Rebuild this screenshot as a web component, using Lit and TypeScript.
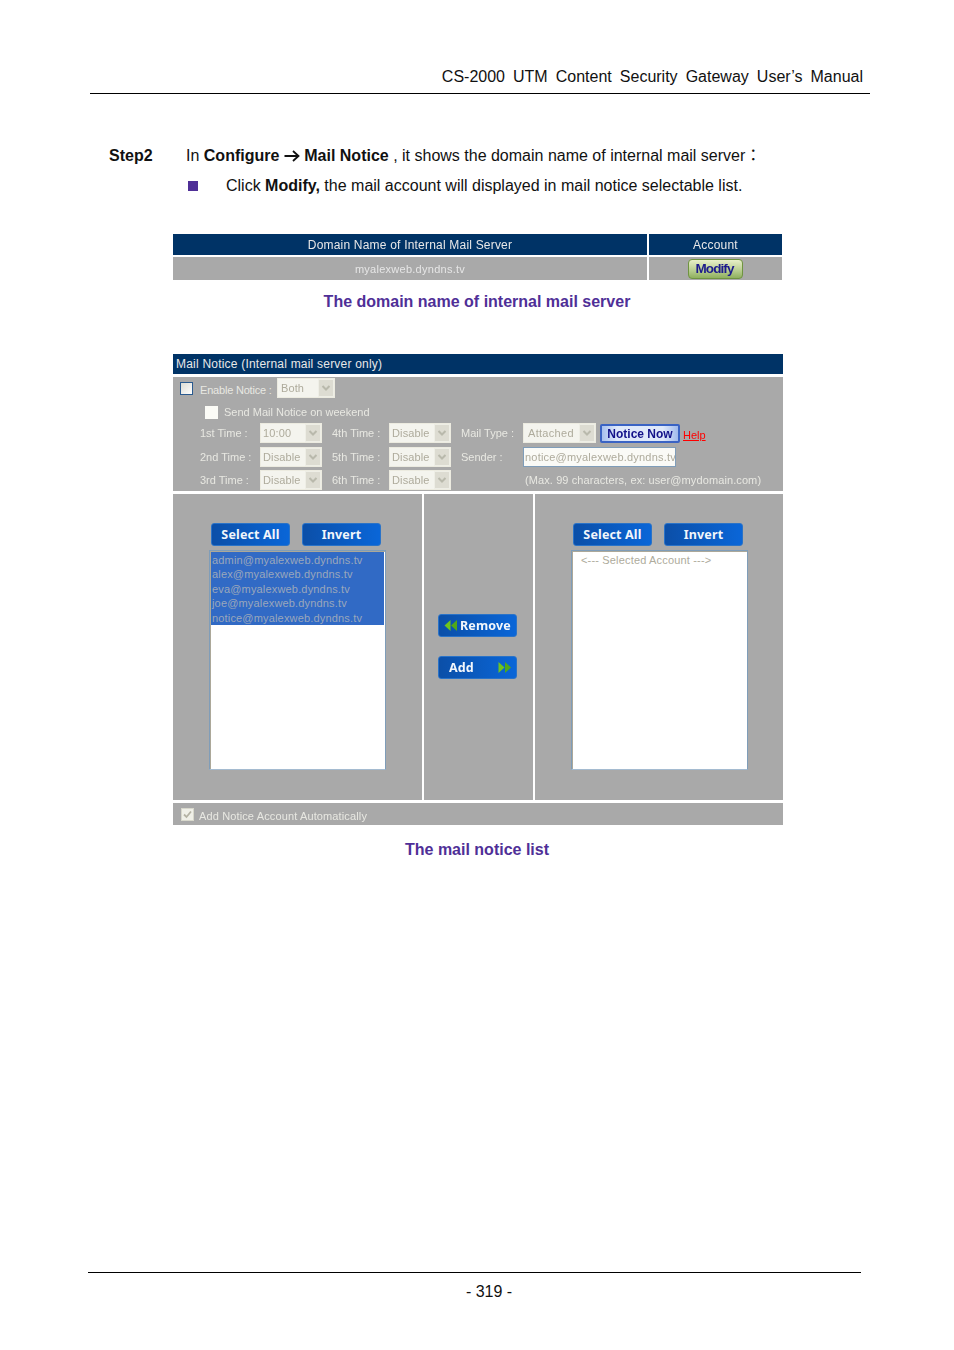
import { LitElement, html, css, svg } from "lit";
import { customElement } from "lit/decorators.js";

const chev = html`<svg class="chev" viewBox="0 0 10 10" width="10" height="10"><path d="M1.5 3 L5 6.5 L8.5 3" fill="none" stroke="#b9b9ac" stroke-width="2"/></svg>`;
const arrowsL = svg`<path d="M6.5 1 V12 L0.5 6.5Z" fill="#6fc41e"/><path d="M13 1 V12 L7 6.5Z" fill="#4fa81a"/>`;
const arrowsR = svg`<path d="M0.5 1 V12 L6.5 6.5Z" fill="#6fc41e"/><path d="M7 1 V12 L13 6.5Z" fill="#4fa81a"/>`;

@customElement("app-root")
export class AppRoot extends LitElement {
  static styles = css`
    :host { display: block; background: #fff; font-family: "Liberation Sans", "Noto Sans CJK TC", Arial, sans-serif; color: #111; }
    .page { width: 954px; height: 1350px; display: flex; flex-direction: column; overflow: hidden; background: #fff; }
    .head { margin: 67px 0 0 90px; width: 780px; height: 26px; box-sizing: content-box; border-bottom: 1px solid #000; text-align: right; font-size: 16px; line-height: 20px; word-spacing: 3.6px; }
    .head span { margin-right: 7px; }
    .step { margin: 52px 0 0 109px; display: flex; font-size: 16px; line-height: 20px; height: 20px; }
    .step .k { width: 77px; font-weight: 700; }
    .arr { display: inline-block; vertical-align: -1px; margin-right: 0; }
    .bul { margin: 10px 0 0 188px; display: flex; align-items: center; font-size: 16px; line-height: 20px; height: 20px; }
    .sq { width: 10px; height: 10px; background: #4f2f97; margin-right: 28px; }
    .t1 { margin: 38px 0 0 173px; width: 609px; display: grid; grid-template-columns: 474px 133px; column-gap: 2px; row-gap: 2px; grid-template-rows: 21px 23px; filter: blur(.45px); font-size: 12px; }
    .t1 > div { display: flex; align-items: center; justify-content: center; }
    .hd { background: #003366; color: #e8e8e8; letter-spacing: .2px; }
    .gr { background: #a9a9a9; color: #e6e6e6; font-size: 11px; letter-spacing: .26px; }
    .modify { width: 55px; height: 20px; box-sizing: border-box; border: 1px solid #6f9440; border-radius: 4px; padding-right: 2px; background: linear-gradient(#e8efc8, #b6cc8e 60%, #8fb05e); color: #1c1a8c; font-weight: 700; font-size: 13.5px; letter-spacing: -.9px; display: flex; align-items: center; justify-content: center; }
    .cap { text-align: center; font-size: 16px; line-height: 20px; font-weight: 700; color: #4f2f97; }
    .c1 { margin-top: 12px; }
    .c2 { margin-top: 15px; }
    .t2 { margin: 42px 0 0 173px; width: 610px; display: flex; flex-direction: column; gap: 3px; filter: blur(.45px); font-size: 11px; color: #e8e8e2; }
    .title { background: #003366; color: #e8e8e8; height: 20px; font-size: 12px; letter-spacing: .21px; line-height: 20px; padding-left: 3px; }
    .form { background: #a9a9a9; height: 114px; box-sizing: border-box; position: relative; display: flex; flex-direction: column; }
    .r1 { display: flex; align-items: center; height: 20px; margin-top: 1px; padding-left: 7px; }
    .cb { width: 13px; height: 13px; box-sizing: border-box; background: #fbfbf6; flex: none; }
    .cb.blue { border: 1.5px solid #2a5a8f; background: linear-gradient(135deg, #dcdcd4, #fff); }
    .r1 .lbl { margin-left: 7px; width: 77px; padding-top: 4px; letter-spacing: -.2px; }
    .r2 { display: flex; align-items: center; height: 12px; margin-top: 8px; padding-left: 32px; }
    .r2 .lbl { margin-left: 6px; }
    .grid { display: grid; grid-template-columns: 60px 62px 10px 57px 62px 10px 62px 73px 4px auto; grid-template-rows: 20px 20px 20px; row-gap: 3.5px; margin: 5px 0 0 27px; align-items: center; }
    .sel { height: 20px; box-sizing: border-box; border: 1px solid #ecebe0; background: #f4f4ee; display: flex; align-items: stretch; color: #aeab9c; line-height: 18px; letter-spacing: .12px; padding-left: 2px; overflow: hidden; white-space: nowrap; }
    .sel .tx { flex: 1; }
    .sel .btn { width: 16px; background: #dddcd2; display: flex; align-items: center; justify-content: center; border: 1px solid #eeeee6; box-sizing: border-box; }
    .chev { display: block; }
    .both { width: 58px; padding-left: 3px; }
    .att { padding-left: 4px; letter-spacing: .3px; }
    .nn { width: 80px; height: 19px; box-sizing: border-box; border: 2px solid #3a63c4; border-radius: 2px; background: linear-gradient(90deg, #a8c0ee, #dfe9fb 20%, #dfe9fb 80%, #a0baec); color: #13138a; font-weight: 700; font-size: 12px; line-height: 16px; text-align: center; white-space: nowrap; }
    .help { color: #f00; text-decoration: underline; margin-left: 3px; font-size: 11px; position: relative; top: 2px; }
    .nnwrap { display: flex; align-items: center; grid-column: 9 / span 2; padding-left: 4px; }
    .inp { grid-column: 8 / span 3; width: 153px; height: 20px; box-sizing: border-box; border: 1px solid #7f9db9; background: #fafaf6; color: #aeab9c; line-height: 18px; letter-spacing: .2px; padding-left: 1px; overflow: hidden; white-space: nowrap; }
    .max { grid-column: 8 / span 3; white-space: nowrap; padding-left: 2px; letter-spacing: .1px; }
    .lists { display: grid; grid-template-columns: 249px 109px 248px; column-gap: 2px; height: 306px; }
    .panel { background: #a9a9a9; }
    .side { padding: 29px 0 0 36px; display: flex; flex-direction: column; }
    .side.right { padding-left: 36px; }
    .btns { display: flex; gap: 12px; padding-left: 2px; }
    .bb { width: 79px; height: 23px; box-sizing: border-box; border-radius: 3px; background: linear-gradient(90deg, #0b4fa8, #0a66d8); border: 1px solid #2a73c8; color: #f2f6fb; font: 700 12.5px/21px "Noto Sans", sans-serif; letter-spacing: .15px; text-align: center; white-space: nowrap; display: flex; align-items: center; justify-content: center; }
    .list { margin-top: 4px; width: 177px; height: 220px; box-sizing: border-box; border: 1px solid #7f9db9; border-bottom-color: #a5bbd0; background: #fff; padding: 1px; box-shadow: inset 1px 1px 0 #aca899; line-height: 14.4px; letter-spacing: .17px; color: #aeab9c; }
    .list .s { background: #316ac5; color: #9aa7bb; padding: 1px 1px 0; height: 73px; box-sizing: border-box; }
    .list .o { padding: 1px 0 0 8px; }
    .mid { display: flex; flex-direction: column; align-items: center; padding: 120px 2px 0 0; gap: 19px; }
    .mid .bb { padding: 0 3px; }
    .rm { justify-content: flex-start; gap: 2px; }
    .rm svg { margin-left: 2px; flex: none; }
    .ad { justify-content: space-between; }
    .ad span { margin-left: 7px; }
    .ad svg { margin-right: 1px; flex: none; }
    .bot { background: #a9a9a9; height: 22px; display: flex; align-items: center; padding-left: 8px; }
    .cb.chk { background: #f0f0e8; border: 1px solid #d8d8cc; display: flex; align-items: center; justify-content: center; }
    .bot .lbl { margin-left: 5px; padding-top: 3px; letter-spacing: .13px; }
    .spacer { flex: 1; }
    .foot { margin-left: 88px; width: 773px; border-top: 1px solid #000; height: 68px; text-align: center; font-size: 16px; line-height: 20px; padding-top: 9px; box-sizing: border-box; margin-bottom: 10px; }
    .foot span { position: relative; left: 14.5px; }
  `;

  sel(text: string, cls = "") {
    return html`<div class="sel ${cls}"><span class="tx">${text}</span><span class="btn">${chev}</span></div>`;
  }

  side(right: boolean) {
    return html`<div class="panel side ${right ? "right" : ""}">
      <div class="btns"><div class="bb">Select All</div><div class="bb">Invert</div></div>
      <div class="list">
        ${right
          ? html`<div class="o">&lt;--- Selected Account ---&gt;</div>`
          : html`<div class="s">admin@myalexweb.dyndns.tv<br />alex@myalexweb.dyndns.tv<br />eva@myalexweb.dyndns.tv<br />joe@myalexweb.dyndns.tv<br />notice@myalexweb.dyndns.tv</div>`}
      </div>
    </div>`;
  }

  render() {
    return html`<div class="page">
      <div class="head"><span>CS-2000 UTM Content Security Gateway User’s Manual</span></div>
      <div class="step"><div class="k">Step2</div><div>In <b>Configure <svg class="arr" width="16" height="12" viewBox="0 0 16 12"><path d="M0.5 6 H14 M9 1 L14.5 6 L9 11" fill="none" stroke="#111" stroke-width="1.8"/></svg> Mail Notice</b> , it shows the domain name of internal mail server：</div></div>
      <div class="bul"><div class="sq"></div><div>Click <b>Modify,</b> the mail account will displayed in mail notice selectable list.</div></div>
      <div class="t1">
        <div class="hd">Domain Name of Internal Mail Server</div><div class="hd">Account</div>
        <div class="gr">myalexweb.dyndns.tv</div><div class="gr"><div class="modify">Modify</div></div>
      </div>
      <div class="cap c1">The domain name of internal mail server</div>
      <div class="t2">
        <div class="title">Mail Notice (Internal mail server only)</div>
        <div class="form">
          <div class="r1"><div class="cb blue"></div><div class="lbl">Enable Notice :</div>${this.sel("Both", "both")}</div>
          <div class="r2"><div class="cb"></div><div class="lbl">Send Mail Notice on weekend</div></div>
          <div class="grid">
            <div>1st Time :</div>${this.sel("10:00")}<div></div><div>4th Time :</div>${this.sel("Disable")}<div></div><div>Mail Type :</div>${this.sel("Attached", "att")}
            <div class="nnwrap"><div class="nn">Notice Now</div><a class="help">Help</a></div>
            <div>2nd Time :</div>${this.sel("Disable")}<div></div><div>5th Time :</div>${this.sel("Disable")}<div></div><div>Sender :</div><div class="inp">notice@myalexweb.dyndns.tv</div>
            <div>3rd Time :</div>${this.sel("Disable")}<div></div><div>6th Time :</div>${this.sel("Disable")}<div></div><div></div><div class="max">(Max. 99 characters, ex: user@mydomain.com)</div>
          </div>
        </div>
        <div class="lists">
          ${this.side(false)}
          <div class="panel mid">
            <div class="bb rm"><svg width="14" height="13" viewBox="0 0 14 13">${arrowsL}</svg><span>Remove</span></div>
            <div class="bb ad"><span>Add</span><svg width="14" height="13" viewBox="0 0 14 13">${arrowsR}</svg></div>
          </div>
          ${this.side(true)}
        </div>
        <div class="bot"><div class="cb chk"><svg width="9" height="9" viewBox="0 0 9 9"><path d="M1 4.5 L3.5 7 L8 1.5" fill="none" stroke="#b5b3a5" stroke-width="1.8"/></svg></div><div class="lbl">Add Notice Account Automatically</div></div>
      </div>
      <div class="cap c2">The mail notice list</div>
      <div class="spacer"></div>
      <div class="foot"><span>- 319 -</span></div>
    </div>`;
  }
}
